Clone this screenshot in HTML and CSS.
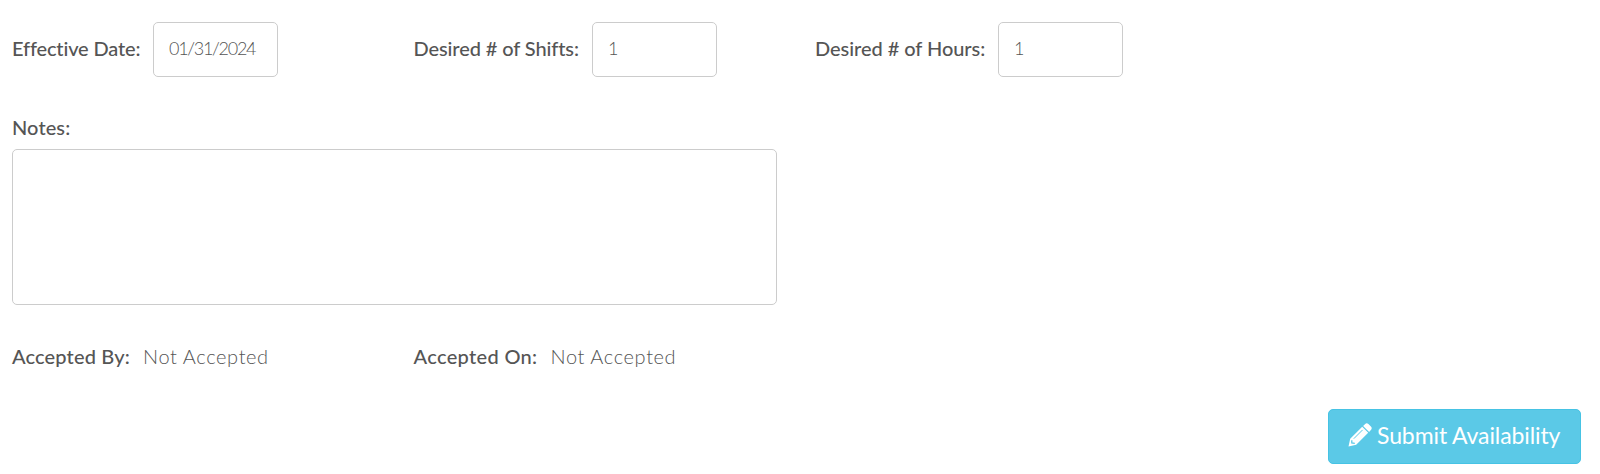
FILE: index.html
```html
<!DOCTYPE html>
<html lang="en">
<head>
    <meta charset="UTF-8">
    <meta name="viewport" content="width=device-width, initial-scale=1.0">
    <title>Availability</title>
    <link rel="stylesheet" href="styles.css">
</head>
<body>
    <form class="availability-form">
        <div class="row fields">
            <div class="form-group">
                <label class="label-date" for="effectiveDate">Effective Date:</label>
                <input type="text" class="form-control date" id="effectiveDate" value="01/31/2024">
            </div>
            <div class="form-group">
                <label class="label-shifts" for="desiredShifts">Desired # of Shifts:</label>
                <input type="text" class="form-control" id="desiredShifts" value="1">
            </div>
            <div class="form-group">
                <label class="label-hours" for="desiredHours">Desired # of Hours:</label>
                <input type="text" class="form-control" id="desiredHours" value="1">
            </div>
        </div>
        <div class="notes">
            <label class="label-notes" for="notes">Notes:</label>
            <textarea class="form-control" id="notes"></textarea>
        </div>
        <div class="row status">
            <div class="form-group">
                <label class="label-by">Accepted By:</label>
                <span class="value">Not Accepted</span>
            </div>
            <div class="form-group">
                <label class="label-on">Accepted On:</label>
                <span class="value">Not Accepted</span>
            </div>
        </div>
        <div class="form-footer">
            <button type="button" class="btn-submit">
                <svg class="icon" viewBox="0 0 24 24" width="24" height="24">
                    <path fill="#fff" d="M0.5 23.5 L2.2 15.8 L14.2 3.8 L20.2 9.8 L8.2 21.8 Z M15.1 2.9 L17.2 0.9 Q18.8 -0.4 20.4 1.1 L22.9 3.6 Q24.4 5.2 23.1 6.8 L21.1 8.9 Z"/>
                    <path fill="none" stroke="#5bc9e7" stroke-width="1" d="M5.8 15.7 L14.6 6.9"/>
                    <path fill="none" stroke="#5bc9e7" stroke-width="1.3" d="M3.8 17.2 L3.8 19.9 L6.8 20.3"/>
                </svg>
                <span>Submit Availability</span>
            </button>
        </div>
    </form>
</body>
</html>
```
FILE: styles.css
```css
* {
    box-sizing: border-box;
}
body {
    font-family: Lato, "Liberation Sans", sans-serif;
    margin: 0;
    background: #fff;
    color: #555;
    font-size: 20px;
    line-height: 28px;
}
.availability-form {
    padding: 22px 19px 0 12px;
}
.row {
    display: grid;
    grid-template-columns: repeat(4, 401.5px);
}
.form-group {
    display: flex;
    align-items: center;
}
label {
    font-weight: 500;
    white-space: nowrap;
}
.fields label {
    padding-bottom: 3px;
}
.label-date {
    width: 141px;
    letter-spacing: -0.15px;
}
.label-shifts {
    width: 178.5px;
    letter-spacing: -0.1px;
}
.label-hours {
    width: 183px;
    letter-spacing: -0.05px;
}
.label-by {
    width: 131px;
    letter-spacing: 0.15px;
}
.label-on {
    width: 137px;
    letter-spacing: 0.33px;
}
.form-control {
    width: 125px;
    height: 55px;
    padding: 0 15px 3px;
    border: 1px solid #ccc;
    border-radius: 5px;
    background: #fff;
    color: #555;
    font-family: inherit;
    font-size: 18px;
    font-weight: 300;
}
.date {
    letter-spacing: -1.3px;
}
.notes {
    margin-top: 36px;
}
.notes label {
    display: block;
    margin-bottom: 8px;
    letter-spacing: 0.1px;
}
textarea.form-control {
    display: block;
    width: 765px;
    height: 156px;
    resize: none;
}
.status {
    margin-top: 37px;
}
.value {
    font-weight: 300;
    letter-spacing: 0.62px;
}
.form-footer {
    display: flex;
    justify-content: flex-end;
    margin-top: 39px;
}
.btn-submit {
    display: flex;
    align-items: center;
    width: 253px;
    height: 55px;
    padding: 0 0 4px 19px;
    gap: 5px;
    border: 1px solid #46c3e4;
    border-radius: 5px;
    background: #5bc9e7;
    color: #fff;
    font-family: inherit;
    font-size: 23px;
    font-weight: 400;
    letter-spacing: -0.1px;
    white-space: nowrap;
    cursor: pointer;
}
.btn-submit .icon {
    flex: none;
}
```
